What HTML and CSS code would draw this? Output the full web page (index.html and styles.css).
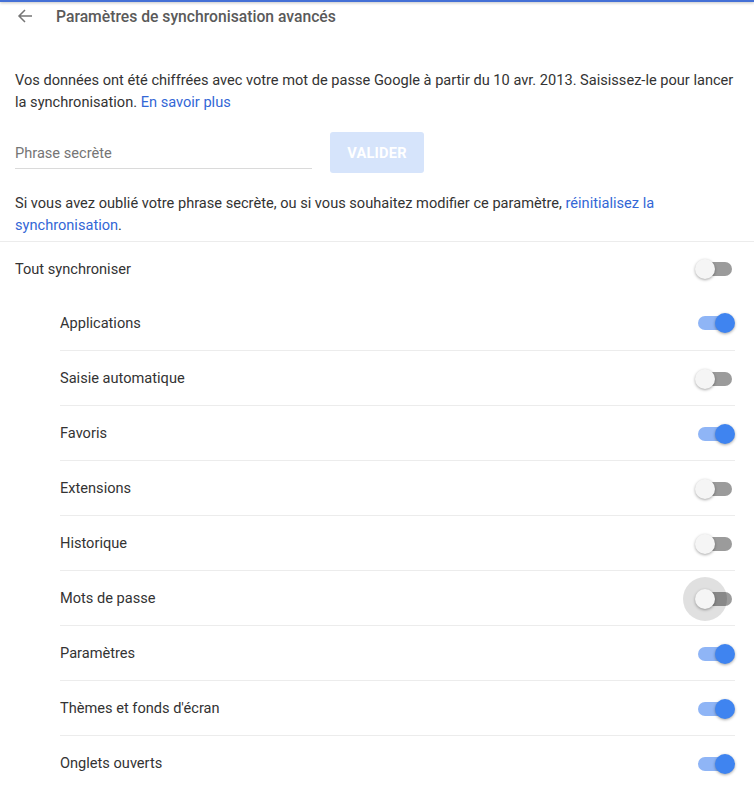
FILE: index.html
```html
<!DOCTYPE html>
<html lang="fr">
<head>
<meta charset="utf-8">
<link rel="stylesheet" href="styles.css">
</head>
<body>
<div class="topline"></div>
<header class="header">
  <svg class="back" width="16" height="16" viewBox="0 0 16 16"><path d="M15 8H2.5M8 2L2 8l6 6" fill="none" stroke="#757575" stroke-width="1.5"/></svg>
  <span class="title">Paramètres de synchronisation avancés</span>
</header>
<main class="main">
  <p class="p1">Vos données ont été chiffrées avec votre mot de passe Google à partir du 10 avr. 2013. Saisissez-le pour lancer la synchronisation. <a class="link">En savoir plus</a></p>
  <div class="pass-row">
    <div class="input"><span>Phrase secrète</span></div>
    <div class="btn">VALIDER</div>
  </div>
  <p class="p2">Si vous avez oublié votre phrase secrète, ou si vous souhaitez modifier ce paramètre, <a class="link">réinitialisez la synchronisation</a>.</p>
</main>
<div class="list">
  <div class="row top"><span>Tout synchroniser</span><span class="tg off"><i></i></span></div>
  <div class="sub">
    <div class="row"><span>Applications</span><span class="tg on"><i></i></span></div>
    <div class="row"><span>Saisie automatique</span><span class="tg off"><i></i></span></div>
    <div class="row"><span>Favoris</span><span class="tg on"><i></i></span></div>
    <div class="row"><span>Extensions</span><span class="tg off"><i></i></span></div>
    <div class="row"><span>Historique</span><span class="tg off"><i></i></span></div>
    <div class="row"><span>Mots de passe</span><span class="tg off focus"><i></i></span></div>
    <div class="row"><span>Paramètres</span><span class="tg on"><i></i></span></div>
    <div class="row"><span>Thèmes et fonds d'écran</span><span class="tg on"><i></i></span></div>
    <div class="row"><span>Onglets ouverts</span><span class="tg on"><i></i></span></div>
  </div>
</div>
</body>
</html>
```

FILE: styles.css
```css
html, body {
  margin: 0;
  padding: 0;
  background: #fff;
  width: 754px;
  overflow: hidden;
}
body {
  font-family: Roboto, "Liberation Sans", sans-serif;
  font-size: 14.6px;
  color: #333;
}
.topline {
  height: 2px;
  background: #4470d6;
  box-shadow: 0 1px 3px rgba(0,0,0,0.28);
}
.header {
  height: 28px;
  display: flex;
  align-items: center;
}
.back {
  margin-left: 17px;
  margin-right: 23px;
}
.title {
  font-size: 15.7px;
  font-weight: 500;
  color: #5a5a5a;
}
.main {
  padding: 0 20px 0 15px;
}
.p1 {
  margin: 39px 0 0;
  line-height: 22px;
  color: #333;
}
.link {
  color: #3367d6;
  text-decoration: none;
}
.pass-row {
  display: flex;
  align-items: flex-start;
  margin-top: 19px;
}
.input {
  width: 297px;
  height: 37px;
  border-bottom: 1px solid #dadada;
  display: flex;
  align-items: center;
  box-sizing: border-box;
  padding-top: 6px;
  color: #757575;
}
.btn {
  margin-left: 18px;
  width: 94px;
  height: 41px;
  border-radius: 3px;
  background: #d6e4fb;
  color: #fff;
  font-weight: 700;
  font-size: 14.6px;
  display: flex;
  align-items: center;
  justify-content: center;
  letter-spacing: 0.2px;
}
.p2 {
  margin: 19px 0 0;
  padding-bottom: 5px;
  line-height: 22px;
  color: #333;
}
.list {
  border-top: 1px solid #ececec;
}
.row {
  height: 55px;
  display: flex;
  align-items: center;
  justify-content: space-between;
  padding-right: 22px;
  color: #333;
}
.row.top {
  padding-left: 15px;
  height: 53px;
}
.sub {
  padding-left: 60px;
}
.sub .row {
  padding-right: 0;
  margin-right: 19px;
}
.sub .row + .row {
  border-top: 1px solid #ececec;
  height: 54px;
}
.sub .row .tg {
  margin-right: 3px;
}
.tg {
  position: relative;
  width: 34px;
  height: 14px;
  border-radius: 7px;
  margin-top: 1px;
}
.tg.off { background: #9b9b9b; }
.tg.on { background: #8fb5f6; }
.tg i {
  position: absolute;
  top: -3px;
  width: 20px;
  height: 20px;
  border-radius: 50%;
  box-shadow: 0 1px 3px rgba(0,0,0,0.35);
}
.tg.off i {
  left: -3px;
  background: #f5f5f5;
}
.tg.on i {
  right: -3px;
  background: #3f84f0;
}
.tg.focus::before {
  content: "";
  position: absolute;
  left: -15px;
  top: -15px;
  width: 44px;
  height: 44px;
  border-radius: 50%;
  background: rgba(0,0,0,0.12);
}
```
